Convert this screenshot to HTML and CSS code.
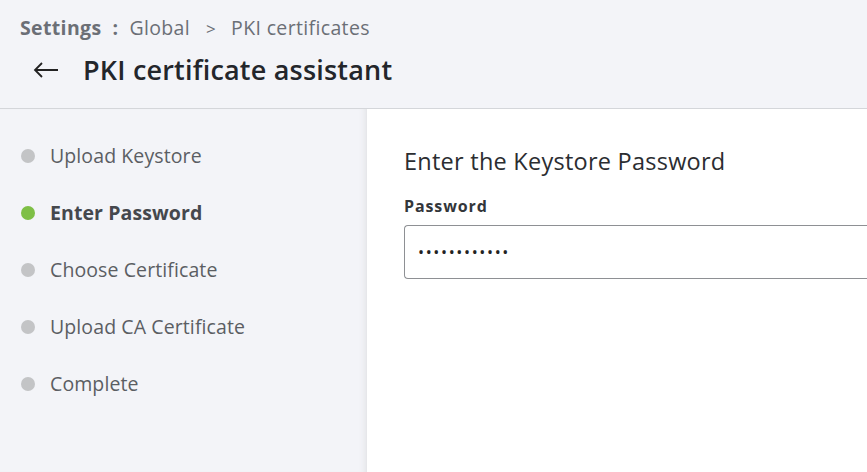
FILE: index.html
```html
<!DOCTYPE html>
<html>
<head>
<meta charset="utf-8">
<link rel="stylesheet" href="styles.css">
</head>
<body>
<header class="header">
  <div class="crumbs">
    <span class="crumb-root">Settings</span>
    <span class="crumb-colon">:</span>
    <span class="crumb">Global</span>
    <span class="crumb-sep">&gt;</span>
    <span class="crumb">PKI certificates</span>
  </div>
  <div class="title-row">
    <svg class="back" width="26" height="16" viewBox="0 0 26 16"><path d="M25 8H2M9 1L2 8l7 7" fill="none" stroke="#222" stroke-width="1.8"/></svg>
    <h1 class="title">PKI certificate assistant</h1>
  </div>
</header>
<div class="body">
  <nav class="steps">
    <div class="step"><span class="dot"></span>Upload Keystore</div>
    <div class="step active"><span class="dot"></span>Enter Password</div>
    <div class="step"><span class="dot"></span>Choose Certificate</div>
    <div class="step"><span class="dot"></span>Upload CA Certificate</div>
    <div class="step"><span class="dot"></span>Complete</div>
  </nav>
  <main class="main">
    <h2 class="heading">Enter the Keystore Password</h2>
    <label class="label">Password</label>
    <div class="input">&#8226;&#8226;&#8226;&#8226;&#8226;&#8226;&#8226;&#8226;&#8226;&#8226;&#8226;&#8226;</div>
  </main>
</div>
</body>
</html>
```
FILE: styles.css
```css
html, body { margin: 0; padding: 0; height: 100%; }
body {
  font-family: "Open Sans", Lato, sans-serif;
  background: #fff;
  overflow: hidden;
  display: flex;
  flex-direction: column;
}
.header {
  background: #f3f4f8;
  border-bottom: 1px solid #d4d6da;
  height: 109px;
  box-sizing: border-box;
  padding: 14px 0 0 20px;
}
.crumbs {
  font-size: 19.5px;
  letter-spacing: 0.35px;
  line-height: 28px;
  color: #6b6f76;
  display: flex;
  align-items: baseline;
}
.crumb-root { font-weight: 700; }
.crumb-colon { font-weight: 700; margin: 0 11px 0 11px; }
.crumb-sep { margin: 0 15px 0 16px; font-size: 17px; }
.title-row {
  display: flex;
  align-items: center;
  margin-top: 9px;
  padding-left: 13px;
}
.back { margin-right: 24px; }
.title {
  margin: 0;
  font-size: 27px;
  letter-spacing: 0.2px;
  line-height: 36px;
  font-weight: 600;
  color: #23262b;
}
.body {
  flex: 1;
  display: flex;
}
.steps {
  width: 367px;
  background: #f3f4f8;
  box-shadow: inset -6px 0 6px -5px #e2e3e6;
  border-right: 1px solid #e6e7ea;
  box-sizing: border-box;
  padding-top: 18px;
  padding-left: 21px;
}
.step {
  display: flex;
  align-items: center;
  height: 57px;
  font-size: 19.5px;
  letter-spacing: 0.1px;
  color: #5b5e63;
}
.step.active { font-weight: 700; color: #45484d; }
.dot {
  width: 14px;
  height: 14px;
  border-radius: 50%;
  background: #c3c4c6;
  margin-right: 15px;
}
.step.active .dot { background: #7ebf46; }
.main {
  flex: 1;
  padding: 36px 0 0 37px;
}
.heading {
  margin: 0;
  font-size: 23.5px;
  letter-spacing: 0.25px;
  line-height: 32px;
  font-weight: 400;
  color: #2b2d31;
}
.label {
  display: block;
  margin-top: 18px;
  font-size: 16px;
  letter-spacing: 0.9px;
  line-height: 22px;
  font-weight: 700;
  color: #33363a;
}
.input {
  margin-top: 8px;
  height: 54px;
  box-sizing: border-box;
  border: 1px solid #8e9094;
  border-right: none;
  border-radius: 4px 0 0 4px;
  padding-left: 13px;
  display: flex;
  align-items: center;
  font-size: 16px;
  letter-spacing: 1.65px;
  color: #222;
}
```
